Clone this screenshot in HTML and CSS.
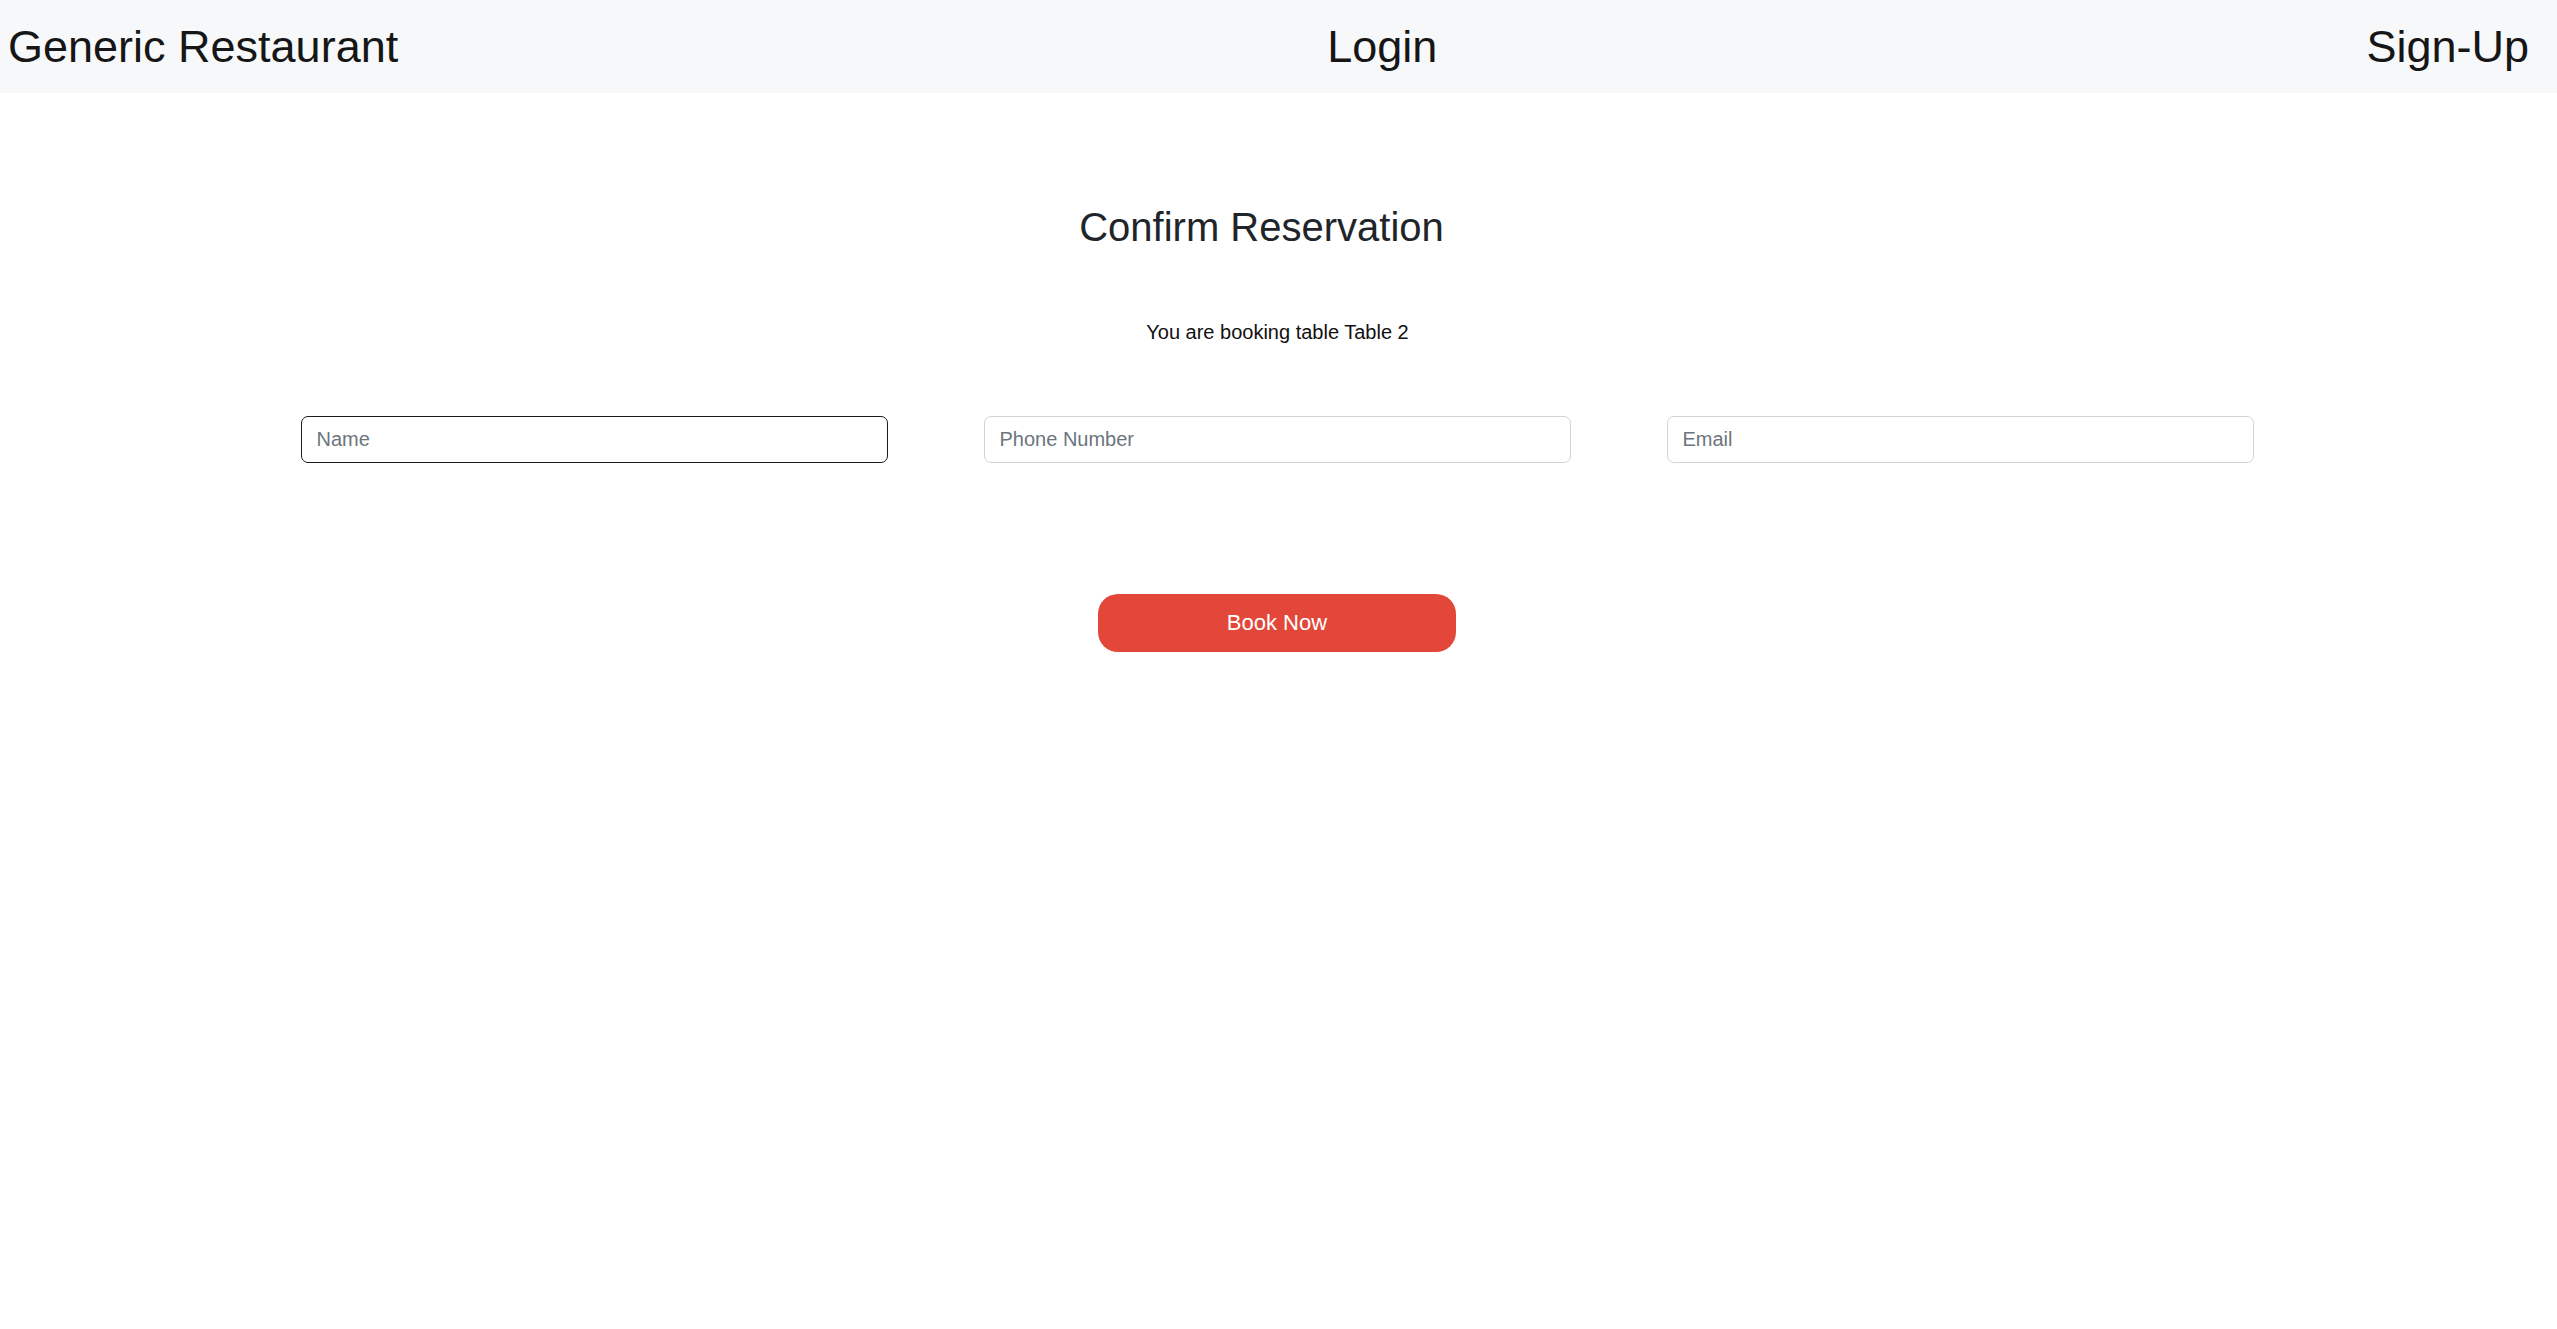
FILE: index.html
```html
<!DOCTYPE html>
<html lang="en">
<head>
<meta charset="utf-8">
<title>Generic Restaurant - Confirm Reservation</title>
<link rel="stylesheet" href="styles.css">
</head>
<body>
<nav class="navbar">
  <a class="nav-link brand" href="#">Generic Restaurant</a>
  <a class="nav-link" href="#">Login</a>
  <a class="nav-link" href="#">Sign-Up</a>
</nav>
<main class="page">
  <h1 class="title">Confirm Reservation</h1>
  <p class="subtitle">You are booking table Table 2</p>
  <form class="form">
    <div class="fields">
      <input class="field field-focus" type="text" placeholder="Name">
      <input class="field" type="text" placeholder="Phone Number">
      <input class="field" type="email" placeholder="Email">
    </div>
    <button class="book-btn" type="button">Book Now</button>
  </form>
</main>
</body>
</html>
```
FILE: styles.css
```css
* { box-sizing: border-box; }
html, body {
  margin: 0;
  padding: 0;
  background: #ffffff;
  font-family: "Liberation Sans", Arial, Helvetica, sans-serif;
  color: #212529;
}
.navbar {
  height: 93px;
  background: #f7f8fa;
  display: flex;
  align-items: center;
  justify-content: space-between;
  padding: 0 28px 0 8px;
}
.nav-link {
  font-size: 45px;
  line-height: 1;
  color: #161616;
  text-decoration: none;
}
.page {
  display: flex;
  flex-direction: column;
  align-items: center;
}
.title {
  margin: 110px 0 0 0;
  padding-right: 34px;
  font-size: 40px;
  line-height: 48px;
  font-weight: 400;
  color: #212529;
}
.subtitle {
  margin: 66px 0 0 0;
  padding-right: 2px;
  font-size: 20px;
  line-height: 30px;
  color: #111;
}
.form {
  display: flex;
  flex-direction: column;
  align-items: center;
  margin-top: 69px;
  padding-right: 3px;
}
.fields {
  display: grid;
  grid-template-columns: repeat(3, 587px);
  column-gap: 96px;
}
.field {
  height: 47px;
  border: 1px solid #ced4da;
  border-radius: 7px;
  padding: 0 15px;
  font-family: "Liberation Sans", Arial, Helvetica, sans-serif;
  font-size: 20px;
  color: #212529;
  background: #fff;
  outline: none;
}
.field::placeholder { color: #6c757d; }
.field-focus { border-color: #1a1a1a; }
.book-btn {
  margin-top: 131px;
  width: 358px;
  height: 58px;
  border: none;
  border-radius: 20px;
  background: #e2473a;
  color: #fff;
  font-family: "Liberation Sans", Arial, Helvetica, sans-serif;
  font-size: 22px;
  cursor: pointer;
}
```
